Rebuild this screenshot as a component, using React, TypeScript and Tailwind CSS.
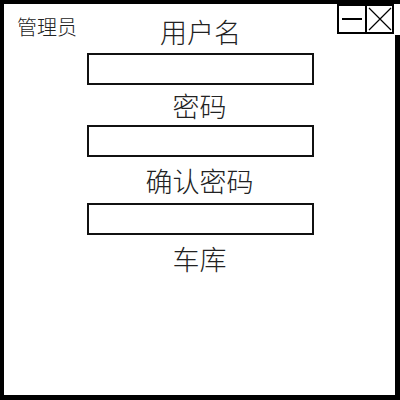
import React from "react";

const Field = ({ className }: { className: string }) => (
  <div className={`w-[227px] h-[32px] border-2 border-[#111] bg-white ${className}`} />
);

const App = () => {
  return (
    <div className="relative w-[400px] h-[400px] bg-white border-black border-t-4 border-l-4 border-r-[5px] border-b-[5px] text-[#222] font-extralight font-['Noto_Sans_CJK_SC','Noto_Sans',sans-serif]">
      {/* window buttons */}
      <div className="absolute top-0 -right-[5px] bg-white pr-[6px] pb-[1px]">
        <div className="flex h-[30px] border-2 border-black">
          <div className="w-[26px] flex items-center justify-center">
            <div className="w-[20px] h-[2px] bg-black" />
          </div>
          <div className="w-[27px] border-l-2 border-black flex items-center justify-center">
            <svg width="24" height="24" viewBox="0 0 24 24">
              <path d="M1 1L23 23M23 1L1 23" stroke="black" strokeWidth="1.2" />
            </svg>
          </div>
        </div>
      </div>

      <div className="grid grid-cols-[1fr_auto_1fr] items-start pt-[13px]">
        <span className="text-[20px] leading-[24px] pl-[13px] -mt-[2px]">管理员</span>
        <span className="text-[27px] leading-[30px] ml-[2px]">用户名</span>
        <div />
      </div>

      <div className="flex flex-col items-center">
        <Field className="mt-[6px] ml-[1px]" />
        <span className="text-[27px] leading-[30px] mt-[6px]">密码</span>
        <Field className="mt-[4px] ml-[1px]" />
        <span className="text-[27px] leading-[30px] mt-[9px]">确认密码</span>
        <Field className="mt-[7px] ml-[1px]" />
        <span className="text-[27px] leading-[30px] mt-[9px]">车库</span>
      </div>
    </div>
  );
};

export default App;
